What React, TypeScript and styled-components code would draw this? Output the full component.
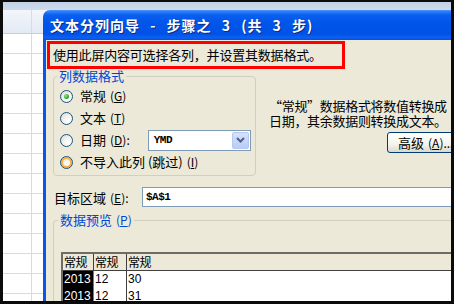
import React from 'react';
import styled, { createGlobalStyle } from 'styled-components';

const Global = createGlobalStyle`
  html, body { margin: 0; padding: 0; background: #000; }
  body { font-family: "Noto Sans CJK SC", sans-serif; }
`;

const Screen = styled.div`
  width: 454px;
  height: 304px;
  box-sizing: border-box;
  border-style: solid;
  border-color: #0b0b0b;
  border-width: 2px 3px 3px 3px;
  position: relative;
  overflow: hidden;
  background: #fff;
`;

/* ---------- spreadsheet behind ---------- */
const Sheet = styled.div`
  display: flex;
  flex-direction: column;
  height: 100%;
`;

const RibbonBand = styled.div`
  height: 8px;
  background: linear-gradient(#c3d1e6, #cfdbed);
  flex: none;
`;

const ColHeader = styled.div`
  height: 23px;
  flex: none;
  display: flex;
  background: linear-gradient(#f3f6fb, #e3eaf4);
  border-bottom: 1px solid #c5cfdf;
`;

const SheetRow = styled.div`
  height: 20px;
  flex: none;
  display: flex;
  border-bottom: 1px solid #d5dce8;
  box-sizing: border-box;
`;

const SheetCell = styled.div<{ $w?: number }>`
  width: ${p => (p.$w ? `${p.$w}px` : 'auto')};
  flex: ${p => (p.$w ? 'none' : '1')};
  border-right: 1px solid #d5dce8;
`;

/* ---------- dialog ---------- */
const Dialog = styled.div`
  position: absolute;
  left: 40px;
  top: 8px;
  width: 440px;
  height: 320px;
  display: flex;
  flex-direction: column;
  border-top-left-radius: 7px;
  overflow: hidden;
  background: #ece9d8;
`;

const TitleBar = styled.div`
  height: 30px;
  flex: none;
  display: flex;
  align-items: center;
  padding-left: 7px;
  background: linear-gradient(
    #4a94fb 0px,
    #2a7af6 2px,
    #0a5ff0 5px,
    #0055ea 45%,
    #0052e4 80%,
    #0b60f4 92%,
    #0a4fd8 100%
  );
  color: #fff;
  font-size: 14px;
  font-weight: bold;
  letter-spacing: 1px;
  word-spacing: 6px;
  text-shadow: 1px 1px 0 #0b2a8c;
  white-space: nowrap;
`;

const Body = styled.div`
  flex: 1;
  display: flex;
  flex-direction: column;
  border-left: 3px solid #0c55ea;
  padding-top: 1px;
  font-size: 13px;
  color: #000;
`;

const Highlight = styled.div`
  margin-left: 1px;
  width: 298px;
  height: 28px;
  box-sizing: border-box;
  border: 3px solid #ff0000;
  padding-left: 3px;
  line-height: 22px;
  letter-spacing: -0.2px;
  white-space: nowrap;
`;

const MainRow = styled.div`
  display: flex;
  align-items: flex-start;
`;

const Group = styled.fieldset<{ $w?: number }>`
  margin: 0 0 0 7px;
  padding: 0 0 2px 6px;
  border: 1px solid #d0d0bf;
  border-radius: 4px;
  width: ${p => (p.$w ? `${p.$w}px` : 'auto')};
  flex: ${p => (p.$w ? 'none' : '1')};
  box-sizing: border-box;
  min-width: 0;
`;

const Legend = styled.legend`
  padding: 0 2px;
  margin-left: -3px;
  color: #0046d5;
  font-size: 13px;
  line-height: 14px;
  white-space: nowrap;
`;

const RadioList = styled.div`
  display: flex;
  flex-direction: column;
  padding-top: 2px;
`;

const RadioRow = styled.div`
  height: 22px;
  display: flex;
  align-items: center;
  gap: 7px;
  white-space: nowrap;
  line-height: 16px;
`;

const RadioDot = styled.span<{ $checked?: boolean; $hot?: boolean }>`
  width: 13px;
  height: 13px;
  flex: none;
  border-radius: 50%;
  box-sizing: border-box;
  border: 1px solid #1d5281;
  background: radial-gradient(circle at 70% 70%, #ffffff 0, #f3f2ee 45%, #d6d4cb 100%);
  box-shadow: ${p => (p.$hot ? 'inset 0 0 0 2px #f9b13a' : 'none')};
  display: flex;
  align-items: center;
  justify-content: center;
  &::after {
    content: '';
    width: 5px;
    height: 5px;
    border-radius: 50%;
    background: ${p =>
      p.$checked ? 'radial-gradient(circle at 35% 35%, #8ee68e, #21a121 70%)' : 'transparent'};
  }
`;

const Key = styled.span`
  text-decoration: underline;
`;

const Mnemonic = styled.span`
  margin-left: 4px;
  font-size: 12px;
`;

const Combo = styled.div`
  margin-left: 11px;
  width: 103px;
  height: 21px;
  box-sizing: border-box;
  border: 1px solid #7f9db9;
  background: #fff;
  display: flex;
  align-items: center;
  padding: 1px;
`;

const ComboText = styled.span`
  flex: 1;
  padding-left: 4px;
  font: bold 11px "Liberation Mono", monospace;
  letter-spacing: -0.5px;
`;

const ComboButton = styled.span`
  width: 17px;
  height: 17px;
  box-sizing: border-box;
  border: 1px solid #b6c8ef;
  border-radius: 2px;
  background: linear-gradient(#d6e2fb, #b8ccf7);
  display: flex;
  align-items: center;
  justify-content: center;
`;

const SideColumn = styled.div`
  margin-left: 13px;
  margin-top: 29px;
  display: flex;
  flex-direction: column;
`;

const Description = styled.div`
  line-height: 15px;
  letter-spacing: -0.3px;
  white-space: nowrap;
`;

const XPButton = styled.div`
  margin-left: 118px;
  margin-top: 4px;
  width: 80px;
  height: 21px;
  box-sizing: border-box;
  border: 1px solid #003c74;
  border-radius: 3px;
  background: linear-gradient(#ffffff, #f4f3ee 60%, #dcd8cc);
  display: flex;
  align-items: center;
  padding-left: 10px;
  white-space: nowrap;
  line-height: 16px;
`;

const TargetRow = styled.div`
  margin-top: 11px;
  margin-left: 8px;
  display: flex;
  align-items: center;
  height: 20px;
`;

const TargetLabel = styled.span`
  width: 88px;
  flex: none;
  white-space: nowrap;
`;

const TextInput = styled.div`
  flex: 1;
  height: 20px;
  box-sizing: border-box;
  border: 1px solid #7f9db9;
  background: #fff;
  padding-left: 3px;
  font: bold 11px "Liberation Mono", monospace;
  letter-spacing: -0.5px;
  line-height: 18px;
`;

const PreviewGroup = styled(Group)`
  margin-top: 6px;
  padding: 0 0 0 7px;
  border-right: none;
  border-bottom: none;
  border-radius: 4px 0 0 0;
`;

const PreviewBox = styled.div`
  margin-top: 25px;
  height: 80px;
  border-top: 2px solid #6e6c63;
  border-left: 2px solid #6e6c63;
  background: #fff;
  display: grid;
  grid-template-columns: 31px 33px 1fr;
  grid-auto-rows: 17px;
  align-content: start;
  font: 12px "Liberation Sans", "Noto Sans CJK SC", sans-serif;
`;

const HeadCell = styled.div`
  background: #ece9d8;
  border-right: 1px solid #404040;
  border-bottom: 1px solid #404040;
  padding-left: 1px;
  line-height: 16px;
  font-family: "Noto Sans CJK SC", sans-serif;
  letter-spacing: -0.5px;
`;

const DataCell = styled.div<{ $selected?: boolean }>`
  background: ${p => (p.$selected ? '#000' : '#fff')};
  color: ${p => (p.$selected ? '#fff' : '#000')};
  border-right: 1px solid ${p => (p.$selected ? '#7a7a7a' : '#404040')};
  padding-left: 1px;
  line-height: 17px;
`;

const Chevron = () => (
  <svg width="9" height="6" viewBox="0 0 9 6">
    <path d="M1 1 L4.5 4.5 L8 1" fill="none" stroke="#4d6185" strokeWidth="2" />
  </svg>
);

const radios = [
  { label: '常规', key: 'G', checked: true },
  { label: '文本', key: 'T' },
  { label: '日期', key: 'D', combo: true },
  { label: '不导入此列 (跳过)', key: 'I', hot: true },
];

const sheetRows = Array.from({ length: 14 });
const previewRows = [
  ['2013', '12', '30'],
  ['2013', '12', '31'],
];

export default function App() {
  return (
    <>
      <Global />
      <Screen>
        <Sheet>
          <RibbonBand />
          <ColHeader>
            <SheetCell $w={28} />
            <SheetCell />
          </ColHeader>
          {sheetRows.map((_, i) => (
            <SheetRow key={i}>
              <SheetCell $w={28} />
              <SheetCell />
            </SheetRow>
          ))}
        </Sheet>

        <Dialog>
          <TitleBar>文本分列向导 - 步骤之 3 (共 3 步)</TitleBar>
          <Body>
            <Highlight>使用此屏内容可选择各列，并设置其数据格式。</Highlight>
            <MainRow>
              <Group $w={203}>
                <Legend>列数据格式</Legend>
                <RadioList>
                  {radios.map(r => (
                    <RadioRow key={r.key}>
                      <RadioDot $checked={r.checked} $hot={r.hot} />
                      <span>
                        {r.label}
                        <Mnemonic>
                          (<Key>{r.key}</Key>){r.combo ? ':' : ''}
                        </Mnemonic>
                      </span>
                      {r.combo && (
                        <Combo>
                          <ComboText>YMD</ComboText>
                          <ComboButton>
                            <Chevron />
                          </ComboButton>
                        </Combo>
                      )}
                    </RadioRow>
                  ))}
                </RadioList>
              </Group>
              <SideColumn>
                <Description>
                  “常规”数据格式将数值转换成
                  <br />
                  日期，其余数据则转换成文本。
                </Description>
                <XPButton>
                  高级<Mnemonic>(<Key>A</Key>)...</Mnemonic>
                </XPButton>
              </SideColumn>
            </MainRow>
            <TargetRow>
              <TargetLabel>
                目标区域<Mnemonic>(<Key>E</Key>):</Mnemonic>
              </TargetLabel>
              <TextInput>$A$1</TextInput>
            </TargetRow>
            <PreviewGroup>
              <Legend>
                数据预览<Mnemonic>(<Key>P</Key>)</Mnemonic>
              </Legend>
              <PreviewBox>
                <HeadCell>常规</HeadCell>
                <HeadCell>常规</HeadCell>
                <HeadCell>常规</HeadCell>
                {previewRows.map((row, i) => (
                  <React.Fragment key={i}>
                    <DataCell $selected>{row[0]}</DataCell>
                    <DataCell>{row[1]}</DataCell>
                    <DataCell>{row[2]}</DataCell>
                  </React.Fragment>
                ))}
              </PreviewBox>
            </PreviewGroup>
          </Body>
        </Dialog>
      </Screen>
    </>
  );
}
